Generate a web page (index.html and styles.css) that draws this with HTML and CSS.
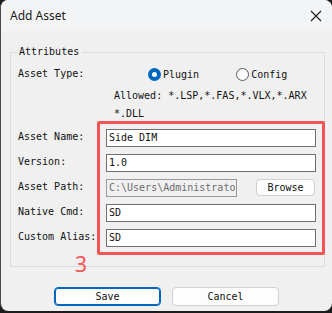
FILE: index.html
```html
<!DOCTYPE html>
<html lang="en">
<head>
  <meta charset="UTF-8" />
  <title>Add Asset</title>
  <link rel="stylesheet" href="styles.css">
</head>
<body>

  <div class="window">
    <!-- Title bar -->
    <div class="titlebar">
      <span class="title">Add Asset</span>
      <svg class="close" width="12" height="12" viewBox="0 0 12 12">
        <path d="M1 1 L11 11 M11 1 L1 11" stroke="#1b1b1b" stroke-width="1.1" fill="none"/>
      </svg>
    </div>

    <div class="body">
      <fieldset class="group">
        <legend>Attributes</legend>

        <div class="row type-row">
          <span class="label">Asset Type:</span>
          <div class="radios">
            <label class="radio"><span class="dot checked"></span>Plugin</label>
            <label class="radio"><span class="dot"></span>Config</label>
          </div>
        </div>

        <div class="allowed">Allowed: *.LSP,*.FAS,*.VLX,*.ARX<br>*.DLL</div>

        <div class="fields">
          <span class="label">Asset Name:</span>
          <div class="input">Side DIM</div>

          <span class="label">Version:</span>
          <div class="input">1.0</div>

          <span class="label">Asset Path:</span>
          <div class="path">
            <div class="input disabled">C:\Users\Administrato</div>
            <button class="btn browse">Browse</button>
          </div>

          <span class="label">Native Cmd:</span>
          <div class="input">SD</div>

          <span class="label">Custom Alias:</span>
          <div class="input">SD</div>
        </div>
      </fieldset>

      <!-- annotation -->
      <div class="mark-box"></div>
      <div class="mark-num">3</div>

      <div class="actions">
        <button class="btn primary">Save</button>
        <button class="btn">Cancel</button>
      </div>
    </div>
  </div>

</body>
</html>
```

FILE: styles.css
```css
* {
  margin: 0; padding: 0;
  box-sizing: border-box;
}

body, html {
  height: 100%;
  background: #1d1d1d;
  font-family: 'DejaVu Sans Mono', monospace;
  font-size: 10px;
  color: #111;
}

.window {
  position: relative;
  width: 332px;
  height: 311px;
  background: #f0f0f0;
  border-radius: 8px;
  border-left: 1px solid #4a4a4a;
  overflow: hidden;
}

.titlebar {
  height: 31px;
  background: #f3f4f6;
  display: flex;
  align-items: center;
  justify-content: space-between;
  padding: 0 10px 0 9px;
}

.title {
  font-family: 'Noto Sans', sans-serif;
  font-size: 12px;
  color: #1b1b1b;
}

.close {
  display: block;
}

.body {
  position: relative;
  padding-top: 15px;
}

.group {
  margin: 0 7px 0 9px;
  border: 1px solid #dcdcdc;
  padding: 7px 8px 19px 7px;
}

.group legend {
  margin-left: -1px;
  padding: 0 3px 0 2px;
  line-height: 12px;
}

.row {
  display: flex;
  align-items: center;
  height: 18px;
}

.label {
  width: 88px;
  line-height: 14px;
  white-space: nowrap;
}

.radios {
  display: flex;
  gap: 37px;
  padding-left: 42px;
}

.radio {
  display: flex;
  align-items: center;
  gap: 2px;
}

.dot {
  width: 13px;
  height: 13px;
  border-radius: 50%;
  border: 1px solid #5b5b5b;
  background: #fbfbfb;
}

.dot.checked {
  border: 4px solid #0067c0;
  background: #fff;
}

.allowed {
  margin: 4px 0 0 96px;
  line-height: 18px;
}

.fields {
  display: grid;
  grid-template-columns: 88px 1fr;
  row-gap: 7px;
  margin-top: 6px;
}

.fields .label {
  padding-top: 1px;
}

.input {
  height: 18px;
  line-height: 16px;
  background: #fff;
  border: 1px solid #707070;
  padding: 0 2px;
  white-space: nowrap;
  overflow: hidden;
}

.input.disabled {
  width: 131px;
  background: #f0f0f0;
  border-color: #9a9a9a;
  color: #6d6d6d;
}

.path {
  display: flex;
  justify-content: space-between;
  align-items: flex-start;
}

.btn {
  font-family: 'DejaVu Sans Mono', monospace;
  font-size: 10px;
  color: #111;
  background: #fdfdfd;
  border: 1px solid #d0d0d0;
  border-radius: 4px;
  width: 107px;
  height: 19px;
}

.browse {
  width: 59px;
  height: 17px;
  margin-right: 1px;
}

.btn.primary {
  border: 1px solid #0067c0;
  box-shadow: inset 0 0 0 1px #0067c0;
}

.actions {
  display: flex;
  justify-content: center;
  gap: 11px;
  margin-top: 20px;
}

.mark-box {
  position: absolute;
  left: 96px;
  top: 90px;
  width: 228px;
  height: 134px;
  border: 3px solid #f55454;
  border-radius: 2px;
}

.mark-num {
  position: absolute;
  left: 74px;
  top: 219px;
  font-family: 'Noto Sans', sans-serif;
  font-size: 21px;
  line-height: 28px;
  color: #f55454;
}
```
